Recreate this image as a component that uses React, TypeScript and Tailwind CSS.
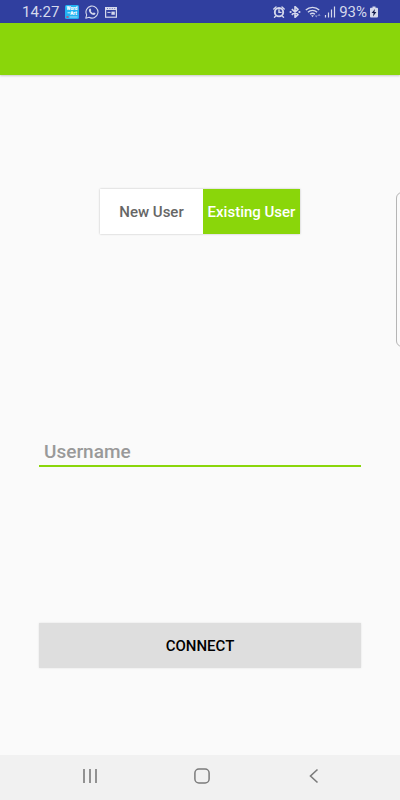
import { useState } from "react";
import { cx } from "class-variance-authority";

function WordArtIcon() {
  return (
    <svg className="h-3.5 w-3.5" viewBox="0 0 14 14" aria-hidden="true">
      <rect width="14" height="14" rx="1.5" fill="#22b2f2" />
      <g fill="#fff" fontFamily="Roboto, sans-serif" fontWeight="900" textAnchor="middle">
        <text x="7" y="5.4" fontSize="4.6">Word</text>
        <text x="8.5" y="10" fontSize="4.6">Art</text>
      </g>
      <path d="M2.5 7.8h3" stroke="#d3efff" strokeWidth="1" />
      <path d="M1.5 12h2" stroke="#e5395f" strokeWidth="1.4" />
      <path d="M4.5 12h8" stroke="#a5def8" strokeWidth="1" />
    </svg>
  );
}

function WhatsAppIcon() {
  return (
    <svg className="h-3.5 w-3.5" viewBox="0 0 14 14" fill="none" aria-hidden="true">
      <path d="M.8 13.2l.9-3.3A6 6 0 1 1 4.1 12.3z" stroke="#d5d9ec" strokeWidth="1.1" strokeLinejoin="round" />
      <path
        d="M4.7 3.7c.5-.4.8-.2 1 .2l.5 1.1c.1.3-.3.7-.5 1 .5 1 1.2 1.7 2.3 2.2.3-.2.6-.9.9-.8l1.3.6c.4.2.3.6.1 1-.5.9-1.5 1.1-2.5.8C5.8 9.1 4.5 7.8 4 6c-.2-.9 0-1.7.7-2.3z"
        fill="#d5d9ec"
      />
    </svg>
  );
}

function CalendarIcon() {
  return (
    <svg className="h-3 w-3" viewBox="0 0 12 12" fill="none" aria-hidden="true">
      <rect x=".6" y="1.6" width="10.8" height="9.6" stroke="#d5d9ec" strokeWidth="1.2" />
      <path d="M0 1h12v3H0z" fill="#d5d9ec" />
      <path d="M2 2.5h1M4.4 2.5h1M6.8 2.5h1M9.2 2.5h1" stroke="#303f9f" strokeWidth=".6" />
      <path d="M2.4 6.4h3.2" stroke="#d5d9ec" strokeWidth="1" />
      <path d="M6.4 5.6h3.4v3.2H6.4z" fill="#d5d9ec" />
    </svg>
  );
}

function AlarmIcon() {
  return (
    <svg className="h-3 w-3" viewBox="0 0 12 12" fill="none" stroke="#d5d9ec" strokeLinecap="round" aria-hidden="true">
      <circle cx="6" cy="6.2" r="4.2" strokeWidth="1.9" />
      <path d="M6 3.8v2.6h2M.8 3L3 1M11.2 3L9 1M2.5 10.3l-1 1M9.500 10.300l1 1" strokeWidth="1.4" />
    </svg>
  );
}

function BluetoothIcon() {
  return (
    <svg className="h-3 w-3" viewBox="0 0 12 12" fill="none" aria-hidden="true">
      <path d="M2.8 3.2L9 8.6l-3 2.7V.7l3 2.7-6.2 5.4" stroke="#d5d9ec" strokeWidth="1.6" strokeLinejoin="round" />
      <circle cx="1.6" cy="6" r="1.1" fill="#d5d9ec" />
      <circle cx="10.4" cy="6" r="1.1" fill="#d5d9ec" />
    </svg>
  );
}

function WifiIcon() {
  return (
    <svg className="h-3 w-4" viewBox="0 0 16 12" fill="none" aria-hidden="true">
      <path d="M.8 4C4.4.4 10.600.4 14.200 4" stroke="#d5d9ec" strokeWidth="1.3" />
      <path d="M2.9 6.2c2.6-2.4 6.6-2.4 9.2 0M5 8.3c1.5-1.3 3.5-1.3 5 0" stroke="#d5d9ec" strokeWidth="1.3" />
      <path d="M6.2 9.6c.8-.6 1.8-.6 2.6 0l-1.300 1.600z" fill="#d5d9ec" />
      <path d="M9.800 9.400l1.500 2 1.500-2zM12.600 9.800l1.500-2 1.500 2z" fill="#8f99cf" />
    </svg>
  );
}

function SignalIcon() {
  return (
    <svg className="h-3 w-3" viewBox="0 0 12 12" aria-hidden="true">
      <path d="M1.5 11.5V9M4.5 11.5V6.5M7.5 11.5V3.5M10.5 11.5V.5" stroke="#d5d9ec" strokeWidth="1.2" />
    </svg>
  );
}

function BatteryIcon() {
  return (
    <svg className="h-3 w-2" viewBox="0 0 8 12" aria-hidden="true">
      <path d="M2.5.5h3v1.3H7q1 0 1 1V10.5q0 1-1 1H1q-1 0-1-1V2.8q0-1 1-1h1.5z" fill="#d5d9ec" />
      <path d="M5 2.9L1.6 7.1h2L3 10.4l3.4-4.3h-2z" fill="#111a4a" />
    </svg>
  );
}

function StatusBar() {
  return (
    <div className="flex h-[23px] items-center justify-between bg-[#303f9f] px-[22px] text-[15px] leading-5 text-[#d5d9ec]">
      <div className="flex items-center gap-1.5">
        <span>14:27</span>
        <WordArtIcon />
        <WhatsAppIcon />
        <CalendarIcon />
      </div>
      <div className="flex items-center gap-1">
        <AlarmIcon />
        <BluetoothIcon />
        <div className="flex items-center gap-[3px]">
          <WifiIcon />
          <SignalIcon />
          <span>93%</span>
          <BatteryIcon />
        </div>
      </div>
    </div>
  );
}

function UserToggle() {
  const [selected, setSelected] = useState("Existing User");
  const options = [
    { name: "New User", width: "w-[103px]" },
    { name: "Existing User", width: "w-[97px]" },
  ];

  return (
    <div className="mx-auto flex h-[45px] bg-white shadow-[0_0_2px_rgba(0,0,0,0.25)]">
      {options.map((option) => (
        <button
          key={option.name}
          type="button"
          aria-pressed={selected === option.name}
          onClick={() => setSelected(option.name)}
          className={cx(
            "text-[15px] leading-5 font-medium whitespace-nowrap",
            option.width,
            selected === option.name ? "bg-[#8ad60a] text-white" : "text-[#666666]"
          )}
        >
          {option.name}
        </button>
      ))}
    </div>
  );
}

function NavBar() {
  return (
    <nav className="flex h-[45px] justify-center gap-24 bg-[#f1f1f1] pt-[13px] pl-[3px]">
      <button type="button" aria-label="Recent apps" className="h-4">
        <svg className="h-4 w-4" viewBox="0 0 16 16" fill="none" stroke="#7b7b7b" strokeWidth="1.6">
          <path d="M2 1v14M8 1v14M14 1v14" />
        </svg>
      </button>
      <button type="button" aria-label="Home" className="h-4">
        <svg className="h-4 w-4" viewBox="0 0 16 16" fill="none" stroke="#7b7b7b" strokeWidth="1.5">
          <rect x=".9" y="1" width="14.2" height="14" rx="4" />
        </svg>
      </button>
      <button type="button" aria-label="Back" className="h-4">
        <svg className="h-4 w-4" viewBox="0 0 16 16" fill="none" stroke="#7b7b7b" strokeWidth="1.6">
          <path d="M11.5 1.5L4.5 8l7 6.5" />
        </svg>
      </button>
    </nav>
  );
}

export default function App() {
  return (
    <div className="relative flex min-h-screen flex-col overflow-hidden bg-[#fafafa] font-['Roboto',sans-serif]">
      <StatusBar />
      <header className="h-[52px] bg-[#8ad60a] shadow-[0_1px_2px_rgba(0,0,0,0.2)]" />

      <form className="flex flex-1 flex-col px-[39px] pt-[114px]" onSubmit={(e) => e.preventDefault()}>
        <UserToggle />
        <input
          type="text"
          aria-label="Username"
          placeholder="Username"
          className="mt-[204px] h-[29px] w-full border-b-2 border-[#8ad60a] px-[5px] text-[19px] leading-6 font-medium outline-none placeholder:text-[#999999]"
        />
        <button
          type="submit"
          className="mt-[156px] h-[45px] w-full bg-[#dedede] text-[15px] leading-5 font-medium text-black shadow-[0_0_2px_rgba(0,0,0,0.1)]"
        >
          CONNECT
        </button>
      </form>

      {/* edge panel handle, hangs off the right side of the screen */}
      <div className="absolute top-48 -right-2 h-[155px] w-3 rounded-md border border-[#b5b5b5]" />

      <NavBar />
    </div>
  );
}
